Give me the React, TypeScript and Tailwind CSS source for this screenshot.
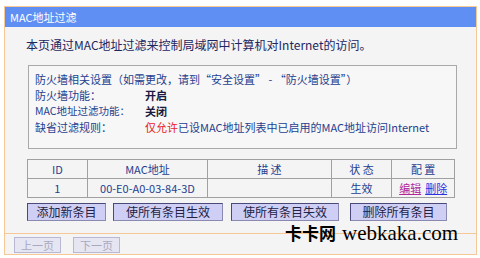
const font = "font-['SimSun','Noto_Sans_CJK_SC',sans-serif]";

const cols = [
  { label: "ID", w: "w-[60px]" },
  { label: "MAC地址", w: "w-[121px]" },
  { label: "描 述", w: "w-[124px]" },
  { label: "状 态", w: "w-[61px]" },
  { label: "配 置", w: "w-[62px]" },
];

function ActionButton({ text, w }: { text: string; w: string }) {
  return (
    <button
      type="button"
      className={`${w} h-[18px] bg-[#cfcff5] border border-[#4a4a7a] border-r-[#8a8ab0] border-b-[#8a8ab0] text-[12px] leading-none text-[#222244]`}
    >
      {text}
    </button>
  );
}

function PageButton({ text }: { text: string }) {
  return (
    <button
      type="button"
      disabled
      className="w-[47px] h-[16px] bg-[#e6e6f2] border border-[#b8b8d4] text-[11px] leading-none text-[#a8a8c0]"
    >
      {text}
    </button>
  );
}

export default function App() {
  return (
    <div className={`w-[480px] h-[258px] bg-white pt-[6px] pl-[4px] ${font}`}>
      <div className="w-[473px] h-[249px] border border-[#f5c896] flex flex-col bg-[#f4f4f4]">
        {/* Header */}
        <div className="h-[20px] bg-[#5f8ff2] text-white text-[11px] leading-[20px] pl-[5px]">
          MAC地址过滤
        </div>

        {/* Body */}
        <div className="relative flex-1 flex flex-col">
          <p className="pt-[10px] pl-[21px] text-[12px] leading-[16px] text-[#1d2660]">
            本页通过MAC地址过滤来控制局域网中计算机对Internet的访问。
          </p>

          {/* Firewall info */}
          <div className="ml-[23px] mt-[12px] w-[429px] h-[84px] border border-[#a9a9a9] bg-[#f7f7f7] pt-[5px] pl-[6px] text-[11px] leading-[16px] text-[#24408f]">
            <div>防火墙相关设置（如需更改，请到“安全设置” - “防火墙设置”）</div>
            <div className="flex">
              <span className="w-[110px]">防火墙功能：</span>
              <span className="font-bold text-[#1a1a40]">开启</span>
            </div>
            <div className="flex">
              <span className="w-[110px] text-[10.5px]">MAC地址过滤功能：</span>
              <span className="font-bold text-[#1a1a40]">关闭</span>
            </div>
            <div className="flex">
              <span className="w-[110px]">缺省过滤规则：</span>
              <span>
                <span className="text-[#e8211c]">仅允许</span>
                <span>已设MAC地址列表中已启用的MAC地址访问Internet</span>
              </span>
            </div>
          </div>

          {/* Table */}
          <div className="ml-[22px] mt-[10px] w-[428px] border border-[#a0a0a0] text-[11px] text-[#24408f]">
            <div className="flex h-[19px] border-b border-[#a0a0a0]">
              {cols.map((c, i) => (
                <div
                  key={c.label}
                  className={`${c.w} flex items-center justify-center ${i < 4 ? "border-r border-[#a0a0a0]" : ""}`}
                >
                  {c.label}
                </div>
              ))}
            </div>
            <div className="flex h-[18px]">
              <div className="w-[60px] flex items-center justify-center border-r border-[#a0a0a0]">1</div>
              <div className="w-[121px] flex items-center justify-center border-r border-[#a0a0a0]">00-E0-A0-03-84-3D</div>
              <div className="w-[124px] border-r border-[#a0a0a0]"></div>
              <div className="w-[61px] flex items-center justify-center border-r border-[#a0a0a0]">生效</div>
              <div className="w-[62px] flex items-center justify-center gap-[4px]">
                <a className="underline text-[#b0279c]">编辑</a>
                <a className="underline text-[#3030e0]">删除</a>
              </div>
            </div>
          </div>

          {/* Buttons */}
          <div className="ml-[22px] mt-[5px] flex">
            <ActionButton text="添加新条目" w="w-[79px]" />
            <div className="w-[7px]" />
            <ActionButton text="使所有条目生效" w="w-[110px]" />
            <div className="w-[8px]" />
            <ActionButton text="使所有条目失效" w="w-[108px]" />
            <div className="w-[11px]" />
            <ActionButton text="删除所有条目" w="w-[97px]" />
          </div>

          {/* Footer */}
          <div className="mt-[12px] border-t border-[#f5c896] flex gap-[12px] pl-[9px] pt-[3px]">
            <PageButton text="上一页" />
            <PageButton text="下一页" />
          </div>

          {/* Watermark */}
          <div className="absolute left-[280px] top-[196px] flex items-baseline gap-[6px] text-black leading-none">
            <span className="text-[17px] font-bold font-['Noto_Sans_CJK_SC',sans-serif]">卡卡网</span>
            <span className="text-[21px] font-['Liberation_Serif',serif]">webkaka.com</span>
          </div>
        </div>
      </div>
    </div>
  );
}
